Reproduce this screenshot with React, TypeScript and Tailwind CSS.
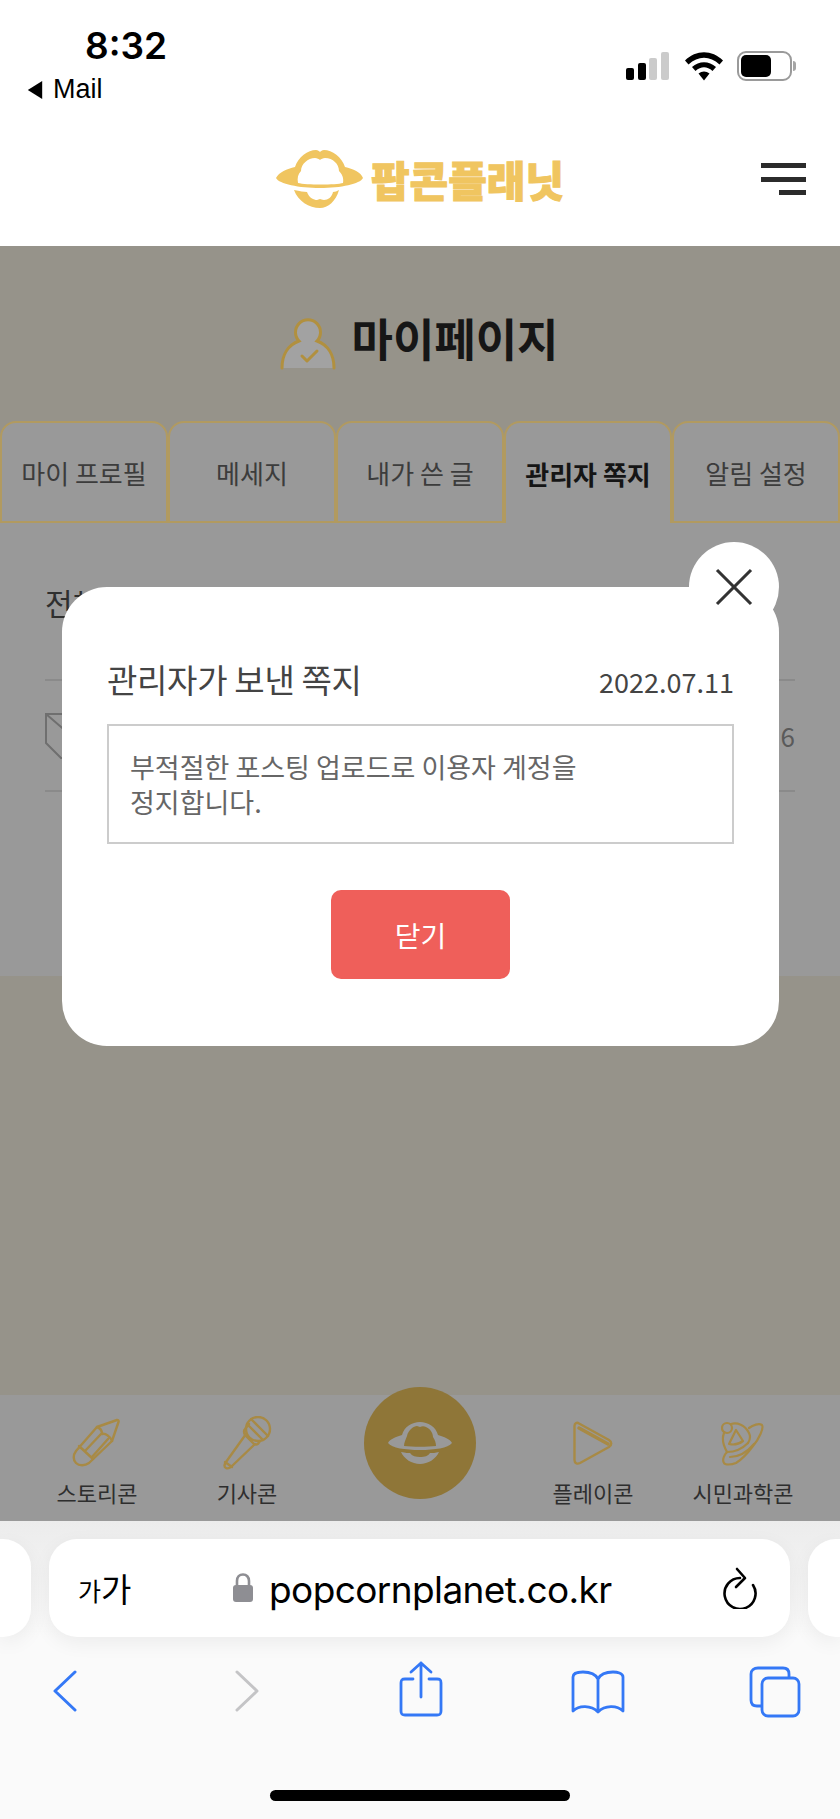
import { X } from 'lucide-react'

const sans = "font-['Noto_Sans_CJK_KR','Noto_Sans',sans-serif]"

const tabs = [
  { label: '마이 프로필' },
  { label: '메세지' },
  { label: '내가 쓴 글' },
  { label: '관리자 쪽지', active: true },
  { label: '알림 설정' },
]

function Planet({ className }: { className: string }) {
  return (
    <svg viewBox="0 0 88 58" className={className} fill="currentColor">
      <path
        fillRule="evenodd"
        d="M0 28C3 22 11 19 19 17C22 7 32 0 40 0C42 0 43 1 44 2C45 1 46 0 48 0C56 0 66 7 69 17C77 19 85 22 87 28C84 34 65 38 44 38C23 38 3 34 0 28ZM22 33C21 28 22 24 25 21C25 14 32 8 39 8C41 8 43 9 44 10C45 9 47 8 49 8C57 8 63 14 63 21C66 24 68 28 67 33C60 35 30 35 22 33Z"
      />
      <path d="M18 40C24 41 28 42 31 42C33 48 38 50 41 50C42 50 43 49 44 49C45 49 46 50 48 50C52 50 56 47 57 42C59 42 61 41 63 40C60 51 52 58 44 58C33 58 22 51 18 40Z" />
    </svg>
  )
}

function NavPlanet() {
  return (
    <svg viewBox="0 0 64 42" className="h-[42px] w-[64px]">
      <path
        fill="#999999"
        d="M0 21C2 17 8 15 14 13C16 5 24 0 32 0C40 0 48 5 50 13C56 15 62 17 64 21C60 26 47 28 32 28C17 28 4 26 0 21Z"
      />
      <path
        fill="#8f7638"
        d="M16 24C16 20 18 17 19 14C20 8 26 4 29 4C30 4 31 5 32 5C34 4 36 4 38 5C43 7 45 12 45 15C47 18 48 21 48 24C40 25 24 25 16 24Z"
      />
      <path
        fill="#999999"
        d="M13 30C18 31 20 31 22 31C24 34 28 35 32 35C37 35 40 34 42 31C45 31 47 31 51 30C48 37 40 42 32 42C24 42 16 37 13 30Z"
      />
    </svg>
  )
}

function PencilIcon() {
  return (
    <svg viewBox="0 0 50 50" className="h-[50px] w-[50px]" fill="none" stroke="#a88a45" strokeWidth="2.4" strokeLinejoin="round" strokeLinecap="round">
      <path d="M25 9L45 2C46.5 2 47 3 46.5 4L40 23L17 45C13 48 7 48 4 45C1 42 1 37 4 33L25 9Z" />
      <path d="M7 28L21 41M25 9C28 10 30 13 30 16C33 15 38 18 40 23M13 33L29 16M20 39L36 21" />
    </svg>
  )
}

function MicIcon() {
  return (
    <svg viewBox="0 0 50 54" className="h-[54px] w-[50px]" fill="none" stroke="#a88a45" strokeWidth="2.4" strokeLinejoin="round" strokeLinecap="round">
      <circle cx="36" cy="13" r="12" />
      <path d="M29 3L46 20M25 8L41 24" />
      <path d="M27 8L23 13C21 15 22 17 23 19L32 28C34 29 36 29 38 25" />
      <path d="M24 18L4 46C2 49 2 51 4 52C6 53 8 52 10 50L33 28" />
      <path d="M3 46L10 51" />
    </svg>
  )
}

function PlayIcon() {
  return (
    <svg viewBox="0 0 40 44" className="h-[44px] w-[40px]" fill="none" stroke="#a88a45" strokeLinejoin="round" strokeLinecap="round">
      <path strokeWidth="2.4" d="M1.5 5C1.5 2 4 1 6 2.5L36 19C39 21 39 24 36 26L7 42C4 43.5 1.5 42 1.5 39Z" />
      <path strokeWidth="3.5" d="M6 7L35 23" />
    </svg>
  )
}

function HatIcon() {
  return (
    <svg viewBox="0 0 44 45" className="h-[45px] w-[44px]" fill="none" stroke="#a88a45" strokeWidth="2.2" strokeLinejoin="round" strokeLinecap="round">
      <circle cx="6" cy="7" r="5" />
      <path d="M28 7C32 4 38 2 41 4C43 7 38 18 32 25C26 33 20 39 15 42C10 44 4 44 3 42C1 39 3 34 6 31" />
      <path d="M6 31C2 24 1 17 3 12M10 3C16 1 24 4 28 12C30 16 29 19 27 22" />
      <path d="M6 31C13 31 21 28 27 22M9 36C18 36 27 30 33 23" />
      <path d="M15 9L8 23C12 24 18 23 22 20Z" />
    </svg>
  )
}

function StatusBar() {
  return (
    <div className="relative h-[124px] shrink-0">
      <div className="flex flex-col">
        <div className="pl-[85px] pt-[24px] font-['Inter',sans-serif] text-[37px] leading-[44px] font-semibold text-black">8:32</div>
        <div className="flex items-center gap-[10px] pl-[27px] font-['Inter',sans-serif] text-[24px] leading-[43px] text-black">
          <svg viewBox="0 0 16 20" className="h-[18px] w-[16px]">
            <path d="M16 0V20L0 10Z" fill="#000" />
          </svg>
          <span className="font-['Liberation_Sans',sans-serif] text-[27px]">Mail</span>
        </div>
      </div>
      <div className="absolute top-[52px] left-[626px] flex items-end gap-[3.5px]">
        <span className="h-[12px] w-[8px] rounded-[2px] bg-black" />
        <span className="h-[17px] w-[8px] rounded-[2px] bg-black" />
        <span className="h-[22px] w-[8px] rounded-[2px] bg-[#cbcbcb]" />
        <span className="h-[28px] w-[8px] rounded-[2px] bg-[#cbcbcb]" />
      </div>
      <svg viewBox="0 0 38 30" className="absolute top-[51px] left-[685px] h-[30px] w-[38px]">
        <path d="M0 9.5C11 -1.5 27 -1.5 38 9.5L34.5 13.5C25 4.5 13 4.5 3.5 13.5Z" fill="#000" />
        <path d="M7 16C14 9.5 24 9.5 31 16L27.5 20C22 15 16 15 10.5 20Z" fill="#000" />
        <path d="M13.5 22.5C17 19.8 21 19.8 24.5 22.5L19 29.5Z" fill="#000" />
      </svg>
      <div className="absolute top-[51px] left-[737px] flex items-center">
        <div className="h-[30px] w-[55px] rounded-[9px] border-2 border-[#9a9a9a] p-[2px]">
          <div className="h-full w-[30px] rounded-[5px] bg-black" />
        </div>
        <div className="ml-[1px] h-[10px] w-[3px] rounded-r-full bg-[#a5a5a5]" />
      </div>
    </div>
  )
}

function Header() {
  return (
    <div className="relative flex h-[122px] shrink-0 items-start justify-center">
      <div className="mt-[26px] flex items-center gap-[7px]">
        <Planet className="h-[58px] w-[88px] text-[#f0c560]" />
        <span className={`${sans} text-[42px] leading-[40px] font-black text-[#f0c560] [-webkit-text-stroke:1px_#f0c560]`}>
          팝콘플래닛
        </span>
      </div>
      <div className="absolute top-[39px] right-[34px] flex w-[45px] flex-col items-end gap-[8.5px]">
        <span className="h-[5px] w-full bg-[#2b2b2b]" />
        <span className="h-[5px] w-full bg-[#2b2b2b]" />
        <span className="h-[5px] w-[27px] bg-[#2b2b2b]" />
      </div>
    </div>
  )
}

function MyPage() {
  return (
    <div className="h-[730px] shrink-0 bg-[#999999]">
      <div className="h-[175px] bg-[#96938a] pt-[66px]">
        <div className="flex items-center justify-center gap-[15px] pr-[1px]">
          <svg viewBox="0 0 56 52" className="mt-[6px] h-[52px] w-[56px]">
            <path d="M2 50C2 37 8 27 19 23A12.5 12.5 0 1 1 37 23C48 27 54 37 54 50Z" fill="#a2a2a2" />
            <path d="M2 50C2 37 8 27 19 23A12.5 12.5 0 1 1 37 23C48 27 54 37 54 50" fill="none" stroke="#b1903f" strokeWidth="3" strokeLinecap="round" />
            <path d="M22 38L27 43L37 33" fill="none" stroke="#b1903f" strokeWidth="3" strokeLinecap="round" strokeLinejoin="round" />
          </svg>
          <h1 className={`${sans} -mt-[6px] text-[45px] leading-[50px] font-bold text-[#161616]`}>마이페이지</h1>
        </div>
      </div>
      <div className="flex h-[102px] bg-[#96938a]">
        {tabs.map((tab) => (
          <div
            key={tab.label}
            className={
              tab.active
                ? `${sans} flex w-[168px] items-center justify-center rounded-t-[16px] border-x-2 border-t-2 border-[#b19a60] bg-[#999999] text-[26px] font-bold text-[#151515]`
                : `${sans} flex w-[168px] items-center justify-center rounded-t-[16px] border-2 border-[#b19a60] bg-[#999999] text-[26px] text-[#3c3c3c]`
            }
          >
            {tab.label}
          </div>
        ))}
      </div>
      <div className="px-[45px]">
        <div className={`${sans} mt-[57px] h-[99px] text-[30px] leading-[44px] text-[#2f2f2f]`}>전체 쪽지</div>
        <div className="flex h-[113px] items-center justify-between border-y-2 border-[#8a8a8a]">
          <svg viewBox="0 0 60 46" className="h-[46px] w-[60px]" fill="none" stroke="#6f6f6f" strokeWidth="2">
            <path d="M1 1H59V30L44 45H16L1 30ZM1 1L30 26L59 1" />
          </svg>
          <span className={`${sans} text-[26px] text-[#5a5a5a]`}>6</span>
        </div>
      </div>
    </div>
  )
}

function NavItem({ label, children }: { label: string; children: React.ReactNode }) {
  return (
    <div className="flex flex-col items-center">
      <div className="flex h-[82px] items-center justify-center pt-[14px]">{children}</div>
      <span className={`${sans} text-[22px] leading-[30px] whitespace-nowrap text-[#2e2e2e]`}>{label}</span>
    </div>
  )
}

function BottomNav() {
  return (
    <div className="grid h-[126px] shrink-0 grid-cols-[150px_150px_196px_150px_150px] bg-[#999999] px-[22px]">
      <NavItem label="스토리콘"><PencilIcon /></NavItem>
      <NavItem label="기사콘"><MicIcon /></NavItem>
      <div className="relative z-10 -mt-[8px] flex h-[112px] w-[112px] items-center justify-center justify-self-center rounded-full bg-[#8f7638]">
        <NavPlanet />
      </div>
      <NavItem label="플레이콘"><PlayIcon /></NavItem>
      <NavItem label="시민과학콘"><HatIcon /></NavItem>
    </div>
  )
}

function SafariChrome() {
  return (
    <div className="flex flex-1 flex-col bg-[#fafafa]">
      <div className="flex h-[116px] justify-between bg-gradient-to-b from-[#ececec] to-[#fafafa] pt-[18px]">
        <div className="h-[98px] w-[31px] rounded-r-[28px] bg-white shadow-[0_6px_20px_rgba(0,0,0,0.06)]" />
        <div className="flex h-[98px] w-[741px] items-center rounded-[28px] bg-white pr-[32px] pl-[29px] shadow-[0_6px_20px_rgba(0,0,0,0.06)]">
          <span className={`${sans} flex w-[125px] items-end text-black`}>
            <span className="text-[25px] leading-[32px]">가</span>
            <span className="text-[33px] leading-[36px]">가</span>
          </span>
          <div className="flex flex-1 items-center gap-[15px] pl-[29px]">
            <svg viewBox="0 0 22 30" className="h-[30px] w-[22px]">
              <path d="M5 13V8C5 4 7.5 1.5 11 1.5C14.5 1.5 17 4 17 8V13" fill="none" stroke="#8e8e93" strokeWidth="2.6" />
              <rect x="1" y="12" width="20" height="17" rx="3" fill="#8e8e93" />
            </svg>
            <span className="mt-[3px] font-['Inter',sans-serif] text-[37px] leading-[44px] tracking-[-0.6px] text-black">popcornplanet.co.kr</span>
          </div>
          <svg viewBox="0 0 36 42" className="h-[42px] w-[36px]" fill="none" stroke="#000" strokeWidth="2.6" strokeLinecap="round" strokeLinejoin="round">
            <path d="M31 18A15.5 15.5 0 1 1 18 11" />
            <path d="M15 2L23 11L14 20" />
          </svg>
        </div>
        <div className="h-[98px] w-[32px] rounded-l-[28px] bg-white shadow-[0_6px_20px_rgba(0,0,0,0.06)]" />
      </div>
      <div className="flex h-[133px] items-start pl-[53px] pt-[33px]">
        <svg viewBox="0 0 24 42" className="h-[42px] w-[24px]" fill="none" stroke="#3478f6" strokeWidth="3" strokeLinecap="round" strokeLinejoin="round">
          <path d="M22 2L2 21L22 40" />
        </svg>
        <svg viewBox="0 0 24 42" className="ml-[158px] h-[42px] w-[24px]" fill="none" stroke="#c4c4c6" strokeWidth="3" strokeLinecap="round" strokeLinejoin="round">
          <path d="M2 2L22 21L2 40" />
        </svg>
        <svg viewBox="0 0 44 56" className="-mt-[9px] ml-[140px] h-[56px] w-[44px]" fill="none" stroke="#3478f6" strokeWidth="2.8" strokeLinecap="round" strokeLinejoin="round">
          <path d="M14 18H6C3 18 2 19 2 22V50C2 53 3 54 6 54H38C41 54 42 53 42 50V22C42 19 41 18 38 18H30" />
          <path d="M22 36V2M12 11L22 2L32 11" />
        </svg>
        <svg viewBox="0 0 54 44" className="ml-[128px] h-[44px] w-[54px]" fill="none" stroke="#3478f6" strokeWidth="2.8" strokeLinecap="round" strokeLinejoin="round">
          <path d="M27 9C24 3 18 2 12 2C8 2 2 3 2 7V41C8 35 20 35 27 42C34 35 46 35 52 41V7C52 3 46 2 42 2C36 2 30 3 27 9V42" />
        </svg>
        <svg viewBox="0 0 52 52" className="-mt-[4px] ml-[124px] h-[52px] w-[52px]" fill="none" stroke="#3478f6" strokeWidth="2.8" strokeLinejoin="round">
          <path d="M40 12V8C40 4 38 2 34 2H9C5 2 2 4 2 8V34C2 38 4 40 8 40H13" />
          <rect x="13" y="12" width="37" height="38" rx="6" />
        </svg>
      </div>
      <div className="flex flex-1 justify-center pt-[20px]">
        <div className="h-[11px] w-[300px] rounded-full bg-black" />
      </div>
    </div>
  )
}

function NoteModal() {
  return (
    <div className="absolute top-[587px] left-[62px] h-[459px] w-[717px] rounded-[45px] bg-white px-[45px] pt-[69px]">
      <button className="absolute -top-[45px] right-0 flex h-[90px] w-[90px] items-center justify-center rounded-full bg-white text-[#333333]">
        <X size={68} strokeWidth={1.1} strokeLinecap="butt" />
      </button>
      <div className={`${sans} flex items-end justify-between`}>
        <h2 className="text-[33px] leading-[46px] tracking-[-0.3px] text-[#444444]">관리자가 보낸 쪽지</h2>
        <span className="text-[27px] leading-[40px] text-[#444444]">2022.07.11</span>
      </div>
      <div className={`${sans} mt-[22px] h-[120px] border-[2.5px] border-[#cccccc] px-[21px] pt-[23px] text-[27px] leading-[35px] text-[#666666]`}>
        부적절한 포스팅 업로드로 이용자 계정을
        <br />
        정지합니다.
      </div>
      <button className={`${sans} mx-auto mt-[46px] flex h-[89px] w-[179px] items-center justify-center rounded-[10px] bg-[#ef5f5a] text-[28px] text-white`}>
        닫기
      </button>
    </div>
  )
}

export default function App() {
  return (
    <div className="relative flex h-[1819px] w-[840px] flex-col overflow-hidden bg-white">
      <StatusBar />
      <Header />
      <MyPage />
      <div className="h-[419px] shrink-0 bg-[#96938a]" />
      <BottomNav />
      <SafariChrome />
      <NoteModal />
    </div>
  )
}
